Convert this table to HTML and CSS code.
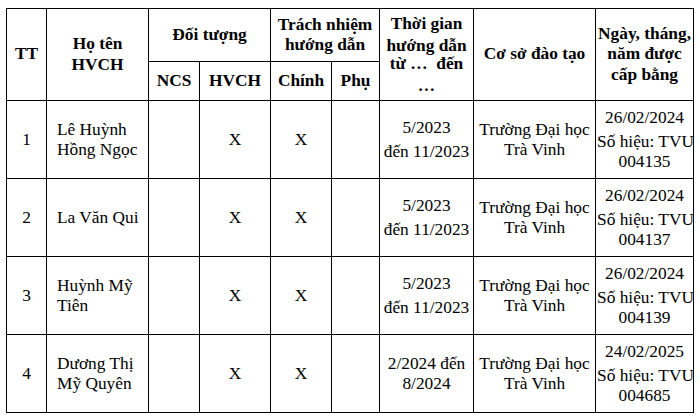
FILE: index.html
```html
<!DOCTYPE html>
<html lang="vi">
<head>
<meta charset="utf-8">
<title>Danh sách HVCH</title>
<link rel="stylesheet" href="styles.css">
</head>
<body>
<table class="grid">
  <colgroup>
    <col class="c-tt"><col class="c-name"><col class="c-ncs"><col class="c-hvch"><col class="c-chinh"><col class="c-phu"><col class="c-time"><col class="c-school"><col class="c-date">
  </colgroup>
  <thead>
    <tr class="h1">
      <th rowspan="2">TT</th>
      <th rowspan="2">Họ tên<br>HVCH</th>
      <th colspan="2">Đối tượng</th>
      <th colspan="2">Trách nhiệm<br>hướng dẫn</th>
      <th rowspan="2" class="th-time"><span class="ln">Thời gian</span><span class="ln">hướng dẫn</span><span class="ln tight">từ …&nbsp; đến</span><span class="ln">…</span></th>
      <th rowspan="2">Cơ sở đào tạo</th>
      <th rowspan="2">Ngày, tháng,<br>năm được<br>cấp bằng</th>
    </tr>
    <tr class="h2">
      <th>NCS</th>
      <th>HVCH</th>
      <th>Chính</th>
      <th>Phụ</th>
    </tr>
  </thead>
  <tbody>
    <tr>
      <td>1</td>
      <td class="name">Lê Huỳnh<br>Hồng Ngọc</td>
      <td></td><td>X</td><td>X</td><td></td>
      <td><span class="ln">5/2023</span><span class="ln gap">đến 11/2023</span></td>
      <td>Trường Đại học<br>Trà Vinh</td>
      <td class="date"><span class="ln">26/02/2024</span><span class="ln gap">Số hiệu: TVU</span><span class="ln">004135</span></td>
    </tr>
    <tr>
      <td>2</td>
      <td class="name">La Văn Qui</td>
      <td></td><td>X</td><td>X</td><td></td>
      <td><span class="ln">5/2023</span><span class="ln gap">đến 11/2023</span></td>
      <td>Trường Đại học<br>Trà Vinh</td>
      <td class="date"><span class="ln">26/02/2024</span><span class="ln gap">Số hiệu: TVU</span><span class="ln">004137</span></td>
    </tr>
    <tr>
      <td>3</td>
      <td class="name">Huỳnh Mỹ<br>Tiên</td>
      <td></td><td>X</td><td>X</td><td></td>
      <td><span class="ln">5/2023</span><span class="ln gap">đến 11/2023</span></td>
      <td>Trường Đại học<br>Trà Vinh</td>
      <td class="date"><span class="ln">26/02/2024</span><span class="ln gap">Số hiệu: TVU</span><span class="ln">004139</span></td>
    </tr>
    <tr>
      <td>4</td>
      <td class="name">Dương Thị<br>Mỹ Quyên</td>
      <td></td><td>X</td><td>X</td><td></td>
      <td><span class="ln">2/2024 đến</span><span class="ln">8/2024</span></td>
      <td>Trường Đại học<br>Trà Vinh</td>
      <td class="date"><span class="ln">24/02/2025</span><span class="ln gap">Số hiệu: TVU</span><span class="ln">004685</span></td>
    </tr>
  </tbody>
</table>
</body>
</html>
```
FILE: styles.css
```css
html, body {
  background: #ffffff;
}
body {
  margin: 8px 0 0 6px;
  font-family: "Liberation Serif", "Times New Roman", serif;
  font-size: 17.33px;
  color: #000000;
}
.grid {
  border-collapse: collapse;
  table-layout: fixed;
  width: 688px;
}
.c-tt { width: 40px; }
.c-name { width: 102px; }
.c-ncs { width: 51px; }
.c-hvch { width: 71px; }
.c-chinh { width: 61px; }
.c-phu { width: 48px; }
.c-time { width: 94px; }
.c-school { width: 122px; }
.c-date { width: 98px; }

.grid th,
.grid td {
  border: 1px solid #000000;
  padding: 0 1px;
  text-align: center;
  vertical-align: middle;
  line-height: 19.5px;
}
.grid th {
  font-weight: bold;
  line-height: 20.5px;
}
.grid th.th-time {
  line-height: 22px;
}
.h1 { height: 53px; }
.h2 { height: 39px; }
.grid tbody tr { height: 78px; }

.grid td.name {
  text-align: left;
  padding-left: 10px;
}
.ln {
  display: block;
  white-space: nowrap;
}
.ln.gap {
  margin-top: 5px;
}
.ln.tight {
  margin-top: -4px;
}
.date {
  white-space: nowrap;
}
```
